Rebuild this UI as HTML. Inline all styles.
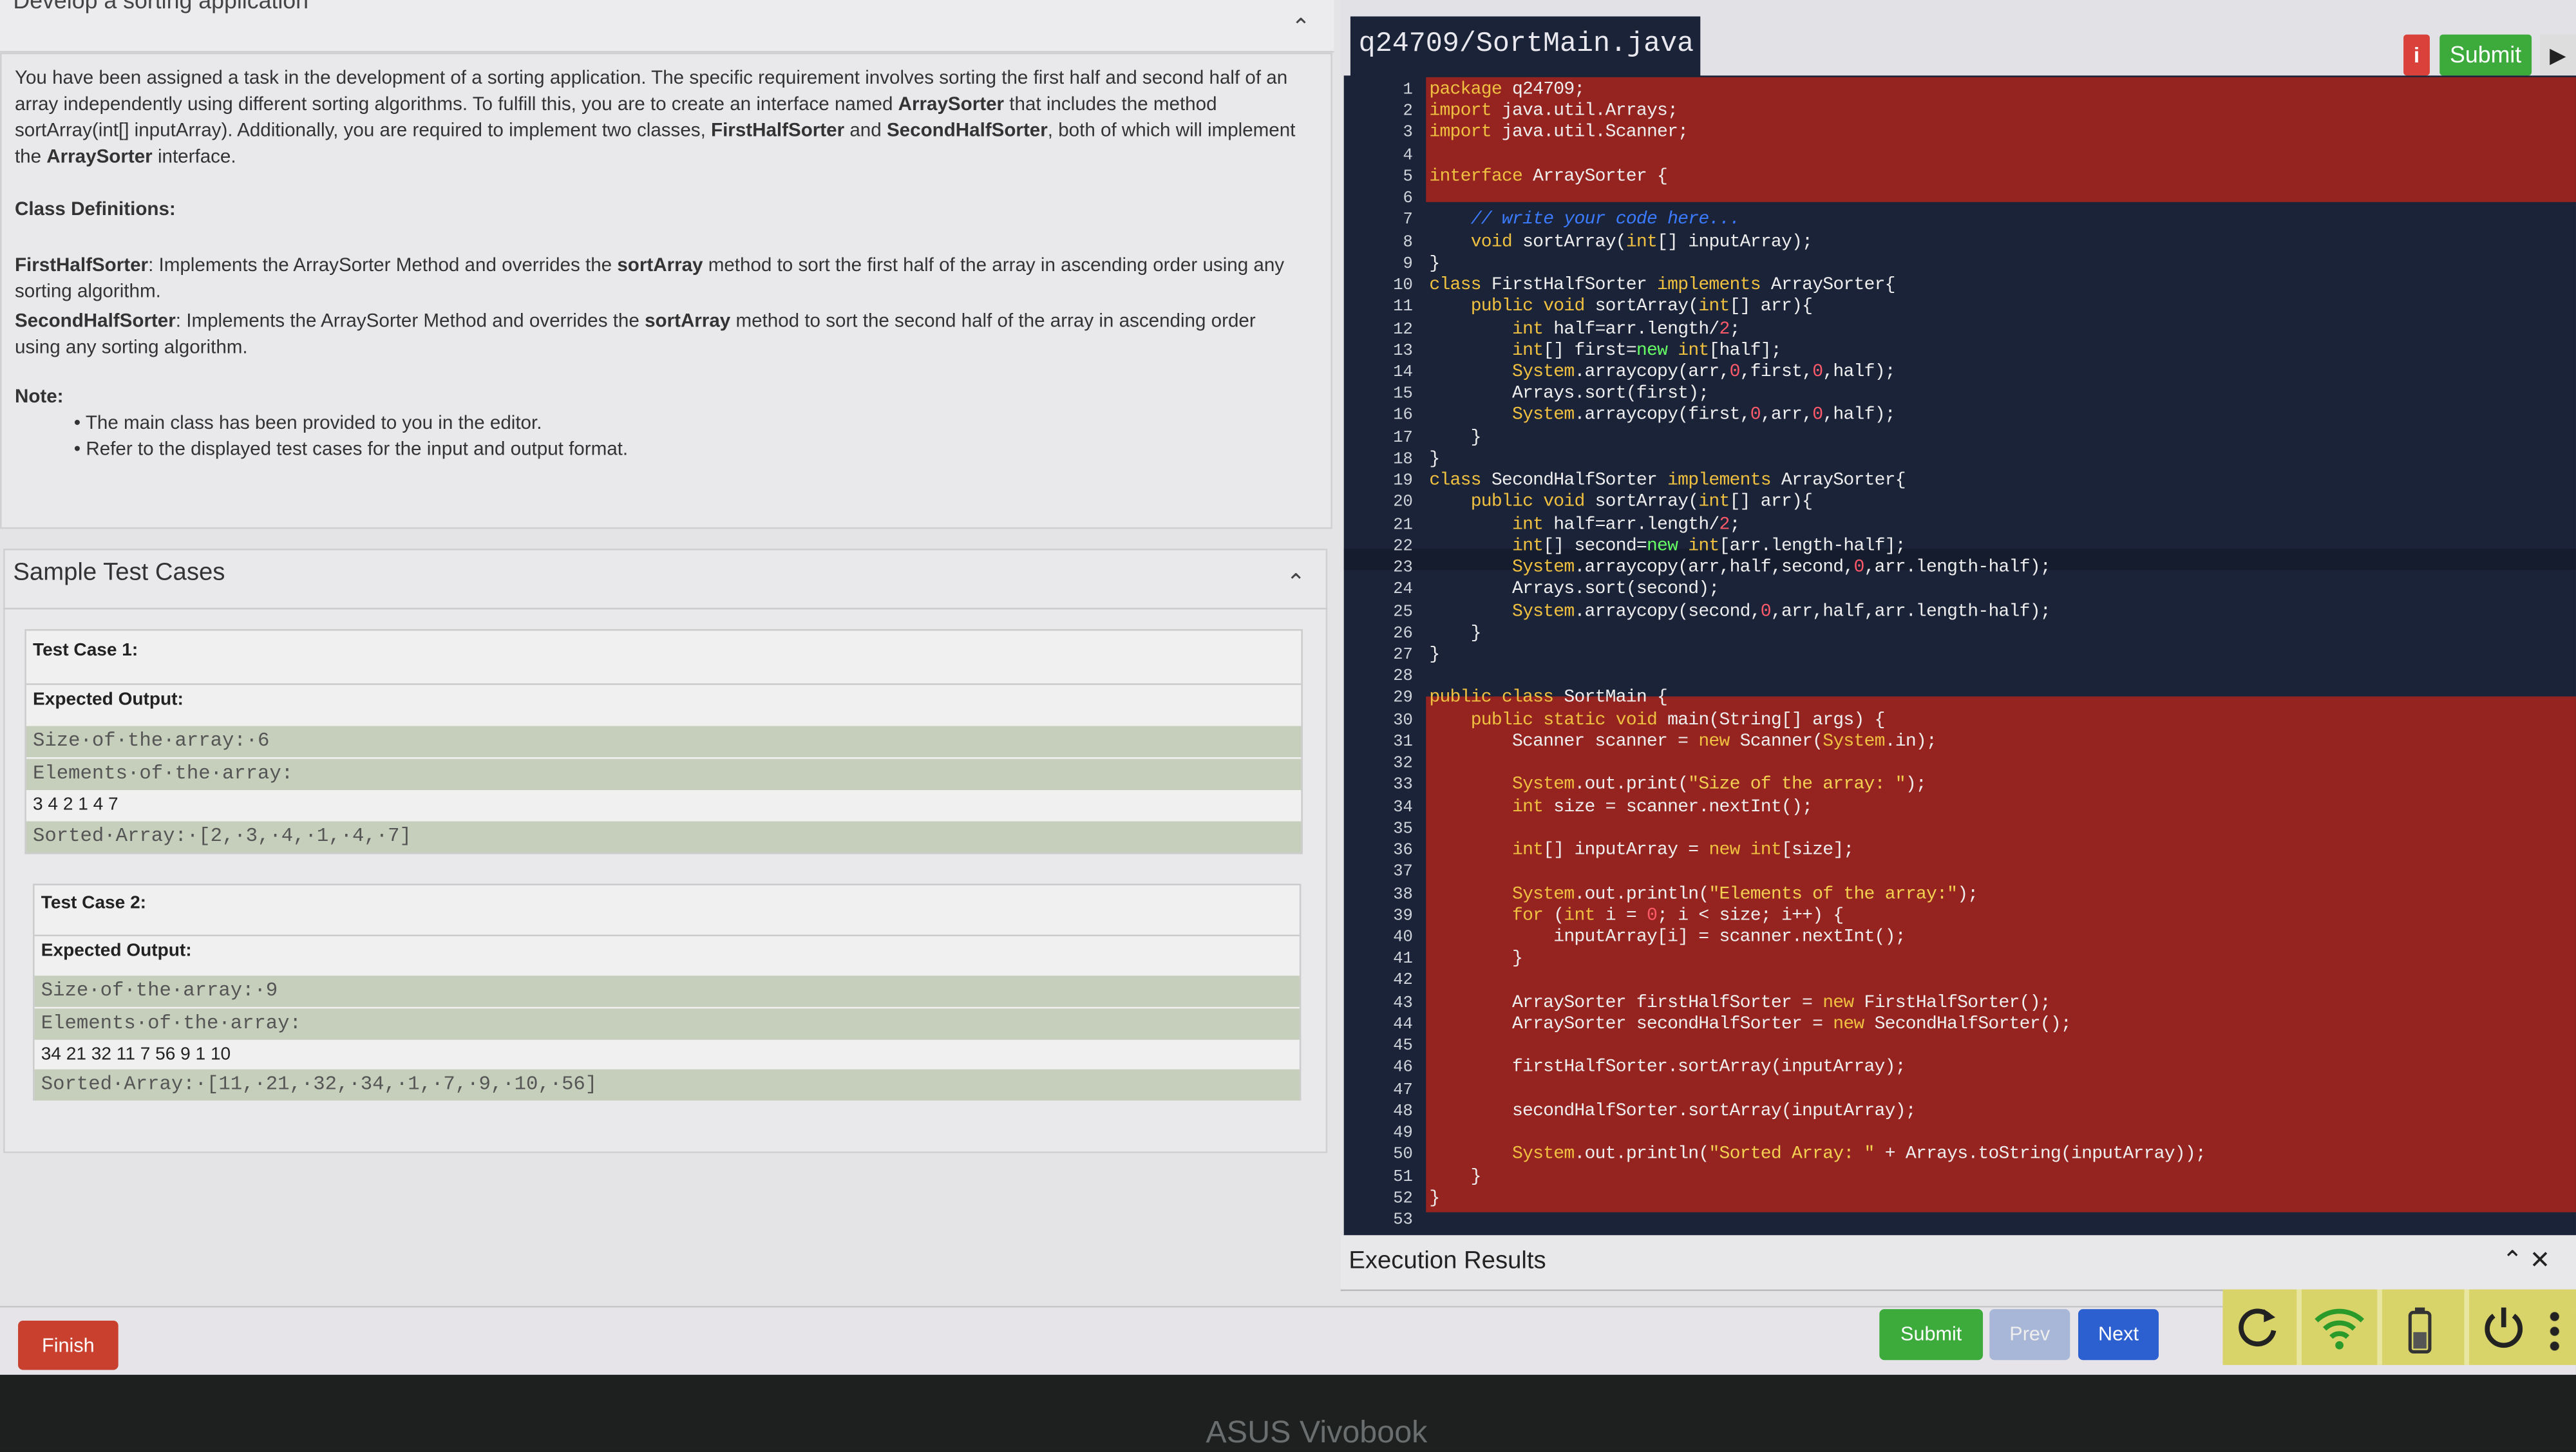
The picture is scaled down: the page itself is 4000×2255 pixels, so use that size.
<!DOCTYPE html>
<html><head><meta charset="utf-8"><style>
*{margin:0;padding:0;box-sizing:border-box}
html,body{width:4000px;height:2252px;overflow:hidden;background:#1d1f1f}
#w{position:absolute;left:0;top:0;width:1568px;height:883px;transform:scale(2.551);transform-origin:0 0;font-family:"Liberation Sans",sans-serif}
.abs{position:absolute}
.left{left:0;top:0;width:1568px;height:800px;background:#e4e3e6}
.card{background:#e9e8eb;border:1px solid #d0d0d2}
p.t{font-size:11.6px;color:#333;line-height:16px}
.tc{left:15px;width:778px;background:#f0f0f0;border:1px solid #ccc;font-size:11px;color:#222}
.row{position:absolute;left:0;right:0;height:19px;font-family:"Liberation Mono",monospace;font-size:12px;color:#555;padding-left:4px;line-height:19px}
.g{background:#c6cfbc}
.code{left:818px;top:46px;width:750px;height:706px;background:#1b2338;overflow:hidden}
.ln{position:absolute;left:0;width:42px;text-align:right;font-family:"Liberation Mono",monospace;font-size:10px;color:#cfd3da}
.cl{position:absolute;left:52px;font-family:"Liberation Mono",monospace;font-size:11px;color:#eee;white-space:pre;letter-spacing:-0.3px}
.k{color:#f0c040}.n{color:#ff5a6a}.c{color:#3b7bff;font-style:italic}.s{color:#f4d050}.nw{color:#6f6}
.red{position:absolute;left:50px;right:0;background:#952420}
</style></head><body><div id="w">
<div class="abs left"></div>
<div class="abs" style="left:0;top:0;width:812px;height:32px;background:#ecebee;border-bottom:1px solid #d0d0d0"></div>
<div class="abs" style="left:8px;top:-8px;font-size:14px;color:#444">Develop a sorting application</div>
<div class="abs" style="left:786px;top:8px;font-size:14px;color:#444">&#8963;</div>
<div class="abs card" style="left:0;top:32px;width:811px;height:290px"></div>
<div class="abs" style="left:9px;top:40px;width:780px">
<p class="t">You have been assigned a task in the development of a sorting application. The specific requirement involves sorting the first half and second half of an array independently using different sorting algorithms. To fulfill this, you are to create an interface named <b>ArraySorter</b> that includes the method sortArray(int[] inputArray). Additionally, you are required to implement two classes, <b>FirstHalfSorter</b> and <b>SecondHalfSorter</b>, both of which will implement the <b>ArraySorter</b> interface.</p>
<p class="t" style="margin-top:16px;font-weight:bold">Class Definitions:</p>
<p class="t" style="margin-top:18px"><b>FirstHalfSorter</b>: Implements the ArraySorter Method and overrides the <b>sortArray</b> method to sort the first half of the array in ascending order using any sorting algorithm.</p>
<p class="t" style="margin-top:2px"><b>SecondHalfSorter</b>: Implements the ArraySorter Method and overrides the <b>sortArray</b> method to sort the second half of the array in ascending order using any sorting algorithm.</p>
<p class="t" style="margin-top:14px;font-weight:bold">Note:</p>
<p class="t" style="padding-left:36px">• The main class has been provided to you in the editor.</p>
<p class="t" style="padding-left:36px">• Refer to the displayed test cases for the input and output format.</p>
</div>
<div class="abs card" style="left:2px;top:334px;width:806px;height:368px"></div>
<div class="abs" style="left:8px;top:340px;font-size:15px;color:#333">Sample Test Cases</div>
<div class="abs" style="left:783px;top:346px;font-size:14px;color:#444">&#8963;</div>
<div class="abs" style="left:2px;top:370px;width:806px;height:1px;background:#ccc"></div>
<div class="abs tc" style="top:383px;height:137px">
<div class="row" style="top:3px;font-family:'Liberation Sans';font-weight:bold;font-size:11px;color:#222">Test Case 1:</div>
<div class="row" style="top:32px;font-family:'Liberation Sans';font-weight:bold;font-size:11px;border-top:1px solid #ccc;color:#222">Expected Output:</div>
<div class="row g" style="top:58px">Size·of·the·array:·6</div>
<div class="row g" style="top:78px">Elements·of·the·array:</div>
<div class="row" style="top:97px;font-family:'Liberation Sans';font-size:11px;color:#222">3 4 2 1 4 7</div>
<div class="row g" style="top:116px">Sorted·Array:·[2,·3,·4,·1,·4,·7]</div>
</div>
<div class="abs tc" style="left:20px;width:772px;top:538px;height:132px">
<div class="row" style="top:2px;font-family:'Liberation Sans';font-weight:bold;font-size:11px;color:#222">Test Case 2:</div>
<div class="row" style="top:30px;font-family:'Liberation Sans';font-weight:bold;font-size:11px;border-top:1px solid #ccc;color:#222">Expected Output:</div>
<div class="row g" style="top:55px">Size·of·the·array:·9</div>
<div class="row g" style="top:75px">Elements·of·the·array:</div>
<div class="row" style="top:94px;font-family:'Liberation Sans';font-size:11px;color:#222">34 21 32 11 7 56 9 1 10</div>
<div class="row g" style="top:112px">Sorted·Array:·[11,·21,·32,·34,·1,·7,·9,·10,·56]</div>
</div>

<div class="abs" style="left:816px;top:0;width:752px;height:46px;background:#e2e2e6"></div>
<div class="abs" style="left:822px;top:10px;width:213px;height:38px;background:#1b2338;color:#e8e8ee;font-family:'Liberation Mono',monospace;font-size:17px;padding:8px 0 0 5px">q24709/SortMain.java</div>
<div class="abs" style="left:1463px;top:21px;width:16px;height:25px;background:#d9413a;color:#fff;font-size:13px;font-weight:bold;text-align:center;line-height:25px;border-radius:2px">i</div>
<div class="abs" style="left:1485px;top:21px;width:56px;height:25px;background:#3cab3c;color:#fff;font-size:14px;text-align:center;line-height:25px;border-radius:2px">Submit</div>
<div class="abs" style="left:1546px;top:21px;width:22px;height:25px;background:#ddd;color:#222;font-size:13px;line-height:25px;text-align:center">&#9654;</div>
<div class="abs code">
<div class="red" style="top:1px;height:76px"></div>
<div class="red" style="top:378px;height:314px"></div>
<div style="position:absolute;left:0;right:0;top:288px;height:13px;background:#121826;opacity:.6"></div>
<div id="lines"></div>
</div>
<div class="abs" style="left:816px;top:752px;width:752px;height:34px;background:#e8e8ea;border-bottom:1px solid #bbb"></div>
<div class="abs" style="left:821px;top:759px;font-size:15px;color:#222">Execution Results</div>
<div class="abs" style="left:1523px;top:758px;font-size:15px;color:#222">&#8963;&nbsp;&#10005;</div>
<div class="abs" style="left:0;top:795px;width:1568px;height:42px;background:#e6e4e8;border-top:1px solid #c8c8c8"></div>
<div class="abs" style="left:11px;top:804px;width:61px;height:30px;background:#c9402f;color:#fff;font-size:12px;text-align:center;line-height:30px;border-radius:3px">Finish</div>
<div class="abs" style="left:1144px;top:797px;width:63px;height:31px;background:#3cab3c;color:#fff;font-size:12px;text-align:center;line-height:31px;border-radius:3px">Submit</div>
<div class="abs" style="left:1211px;top:797px;width:49px;height:31px;background:#a8b6d8;color:#eee;font-size:12px;text-align:center;line-height:31px;border-radius:3px">Prev</div>
<div class="abs" style="left:1265px;top:797px;width:49px;height:31px;background:#2c5fcf;color:#fff;font-size:12px;text-align:center;line-height:31px;border-radius:3px">Next</div>
<div class="abs" style="left:1353px;top:785px;width:215px;height:46px;background:#d8d46a"></div>
<div class="abs" style="left:1398px;top:785px;width:3px;height:46px;background:#e8e6a0"></div>
<div class="abs" style="left:1447px;top:785px;width:3px;height:46px;background:#e8e6a0"></div>
<div class="abs" style="left:1500px;top:785px;width:3px;height:46px;background:#e8e6a0"></div>
<svg class="abs" style="left:1360px;top:793px" width="30" height="30" viewBox="0 0 30 30"><path d="M22 9A10 10 0 1 0 24 17" fill="none" stroke="#222" stroke-width="3"/><path d="M18 4L25 9L18 12Z" fill="#222"/></svg>
<svg class="abs" style="left:1407px;top:794px" width="34" height="30" viewBox="0 0 34 30"><path d="M3 10A20 20 0 0 1 31 10M8 15A13 13 0 0 1 26 15M12 20A7 7 0 0 1 22 20" fill="none" stroke="#2a9a2a" stroke-width="3"/><circle cx="17" cy="25" r="2.5" fill="#2a9a2a"/></svg>
<svg class="abs" style="left:1464px;top:795px" width="18" height="30" viewBox="0 0 18 30"><rect x="3" y="4" width="12" height="24" rx="2" fill="none" stroke="#333" stroke-width="2"/><rect x="6" y="1" width="6" height="3" fill="#333"/><rect x="5" y="16" width="8" height="10" fill="#555"/></svg>
<svg class="abs" style="left:1509px;top:793px" width="30" height="30" viewBox="0 0 30 30"><path d="M9 8A10 10 0 1 0 21 8" fill="none" stroke="#222" stroke-width="3"/><path d="M15 3V15" stroke="#222" stroke-width="3"/></svg>
<div class="abs" style="left:1552px;top:797px;width:6px;height:28px;background:radial-gradient(circle,#222 2.5px,transparent 3px) 0 0/6px 9px"></div>
<div class="abs" style="left:0;top:837px;width:1568px;height:46px;background:#1e2020"></div>
<div class="abs" style="left:734px;top:862px;font-size:19px;color:#6a6e6e">ASUS Vivobook</div>
</div>
<script>
var L=[
'<span class="k">package</span> q24709;','<span class="k">import</span> java.util.Arrays;','<span class="k">import</span> java.util.Scanner;','',
'<span class="k">interface</span> ArraySorter {','','    <span class="c">// write your code here...</span>','    <span class="k">void</span> sortArray(<span class="k">int</span>[] inputArray);','}',
'<span class="k">class</span> FirstHalfSorter <span class="k">implements</span> ArraySorter{','    <span class="k">public void</span> sortArray(<span class="k">int</span>[] arr){',
'        <span class="k">int</span> half=arr.length/<span class="n">2</span>;','        <span class="k">int</span>[] first=<span class="nw">new</span> <span class="k">int</span>[half];',
'        <span class="k">System</span>.arraycopy(arr,<span class="n">0</span>,first,<span class="n">0</span>,half);','        Arrays.sort(first);',
'        <span class="k">System</span>.arraycopy(first,<span class="n">0</span>,arr,<span class="n">0</span>,half);','    }','}',
'<span class="k">class</span> SecondHalfSorter <span class="k">implements</span> ArraySorter{','    <span class="k">public void</span> sortArray(<span class="k">int</span>[] arr){',
'        <span class="k">int</span> half=arr.length/<span class="n">2</span>;','        <span class="k">int</span>[] second=<span class="nw">new</span> <span class="k">int</span>[arr.length-half];',
'        <span class="k">System</span>.arraycopy(arr,half,second,<span class="n">0</span>,arr.length-half);','        Arrays.sort(second);',
'        <span class="k">System</span>.arraycopy(second,<span class="n">0</span>,arr,half,arr.length-half);','    }','}','',
'<span class="k">public class</span> SortMain {','    <span class="k">public static void</span> main(String[] args) {','        Scanner scanner = <span class="k">new</span> Scanner(<span class="k">System</span>.in);','',
'        <span class="k">System</span>.out.print(<span class="s">"Size of the array: "</span>);','        <span class="k">int</span> size = scanner.nextInt();','',
'        <span class="k">int</span>[] inputArray = <span class="k">new int</span>[size];','',
'        <span class="k">System</span>.out.println(<span class="s">"Elements of the array:"</span>);','        <span class="k">for</span> (<span class="k">int</span> i = <span class="n">0</span>; i &lt; size; i++) {',
'            inputArray[i] = scanner.nextInt();','        }','',
'        ArraySorter firstHalfSorter = <span class="k">new</span> FirstHalfSorter();','        ArraySorter secondHalfSorter = <span class="k">new</span> SecondHalfSorter();','',
'        firstHalfSorter.sortArray(inputArray);','','        secondHalfSorter.sortArray(inputArray);','',
'        <span class="k">System</span>.out.println(<span class="s">"Sorted Array: "</span> + Arrays.toString(inputArray));','    }','}',''];
var h='';for(var i=0;i<L.length;i++){var y=4+i*13.23;h+='<div class="ln" style="top:'+y+'px">'+(i+1)+'</div><div class="cl" style="top:'+(y-1)+'px">'+L[i]+'</div>';}
document.getElementById('lines').innerHTML=h;
</script>
</body></html>
